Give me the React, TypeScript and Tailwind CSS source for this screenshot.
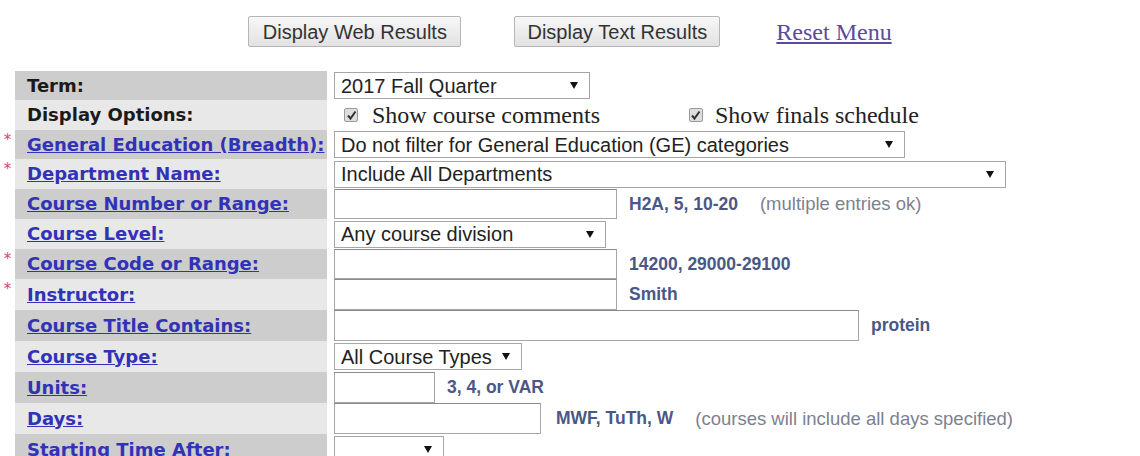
import React from "react";

type Row = {
  label: string;
  link: boolean;
  star?: boolean;
  h: string;
  dark: boolean;
  content: React.ReactNode;
};

const Arrow = () => (
  <svg width="10" height="9" viewBox="0 0 10 9" className="shrink-0">
    <polygon points="1,1 9,1 5,8" fill="#111" />
  </svg>
);

function Select({ text, w }: { text: string; w: string }) {
  return (
    <div
      className={`${w} h-[27px] bg-white border border-[#a6a6a6] flex items-center justify-between pl-[6px] pr-[10px] text-[20px] leading-none text-[#222] font-['Liberation_Sans',Arial,sans-serif]`}
    >
      <span className="whitespace-nowrap">{text}</span>
      <Arrow />
    </div>
  );
}

function Input({ w }: { w: string }) {
  return <div className={`${w} h-full bg-white border border-[#a6a6a6] border-t-[#8a8a8a]`} />;
}

function Hint({ text, cls }: { text: string; cls?: string }) {
  return (
    <span
      className={`whitespace-nowrap font-bold text-[17.5px] text-[#4a5787] font-['Liberation_Sans',Arial,sans-serif] ${cls ?? ""}`}
    >
      {text}
    </span>
  );
}

function Note({ text, cls }: { text: string; cls?: string }) {
  return (
    <span
      className={`whitespace-nowrap text-[18.5px] text-[#7c8190] font-['Liberation_Sans',Arial,sans-serif] ${cls ?? ""}`}
    >
      {text}
    </span>
  );
}

function Check() {
  return (
    <div className="w-[14px] h-[14px] border border-[#9a9a9a] bg-[#dedede] flex items-center justify-center rounded-[2px]">
      <svg width="11" height="11" viewBox="0 0 11 11">
        <path d="M2 5.5 L4.5 8.5 L9.5 1.5" stroke="#333" strokeWidth="2" fill="none" />
      </svg>
    </div>
  );
}

export default function App() {
  const rows: Row[] = [
    {
      label: "Term:",
      link: false,
      h: "h-[29px]",
      dark: true,
      content: <Select text="2017 Fall Quarter" w="w-[256px]" />,
    },
    {
      label: "Display Options:",
      link: false,
      h: "h-[30px]",
      dark: false,
      content: (
        <div className="flex items-center h-full font-['Liberation_Serif','Times_New_Roman',serif] text-[24px] leading-none text-[#222]">
          <div className="ml-[10px]">
            <Check />
          </div>
          <span className="ml-[14px] whitespace-nowrap">Show course comments</span>
          <div className="ml-[89px]">
            <Check />
          </div>
          <span className="ml-[12px] whitespace-nowrap">Show finals schedule</span>
        </div>
      ),
    },
    {
      label: "General Education (Breadth):",
      link: true,
      star: true,
      h: "h-[29px]",
      dark: true,
      content: <Select text="Do not filter for General Education (GE) categories" w="w-[571px]" />,
    },
    {
      label: "Department Name:",
      link: true,
      star: true,
      h: "h-[30px]",
      dark: false,
      content: <Select text="Include All Departments" w="w-[672px]" />,
    },
    {
      label: "Course Number or Range:",
      link: true,
      h: "h-[30px]",
      dark: true,
      content: (
        <div className="flex items-center h-full">
          <Input w="w-[283px]" />
          <Hint text="H2A, 5, 10-20" cls="ml-[12px]" />
          <Note text="(multiple entries ok)" cls="ml-[22px]" />
        </div>
      ),
    },
    {
      label: "Course Level:",
      link: true,
      h: "h-[30px]",
      dark: false,
      content: <Select text="Any course division" w="w-[272px]" />,
    },
    {
      label: "Course Code or Range:",
      link: true,
      star: true,
      h: "h-[30px]",
      dark: true,
      content: (
        <div className="flex items-center h-full">
          <Input w="w-[283px]" />
          <Hint text="14200, 29000-29100" cls="ml-[12px]" />
        </div>
      ),
    },
    {
      label: "Instructor:",
      link: true,
      star: true,
      h: "h-[31px]",
      dark: false,
      content: (
        <div className="flex items-center h-full">
          <Input w="w-[283px]" />
          <Hint text="Smith" cls="ml-[12px]" />
        </div>
      ),
    },
    {
      label: "Course Title Contains:",
      link: true,
      h: "h-[31px]",
      dark: true,
      content: (
        <div className="flex items-center h-full">
          <Input w="w-[525px]" />
          <Hint text="protein" cls="ml-[12px]" />
        </div>
      ),
    },
    {
      label: "Course Type:",
      link: true,
      h: "h-[31px]",
      dark: false,
      content: <Select text="All Course Types" w="w-[188px]" />,
    },
    {
      label: "Units:",
      link: true,
      h: "h-[31px]",
      dark: true,
      content: (
        <div className="flex items-center h-full">
          <Input w="w-[101px]" />
          <Hint text="3, 4, or VAR" cls="ml-[12px]" />
        </div>
      ),
    },
    {
      label: "Days:",
      link: true,
      h: "h-[31px]",
      dark: false,
      content: (
        <div className="flex items-center h-full">
          <Input w="w-[207px]" />
          <Hint text="MWF, TuTh, W" cls="ml-[15px]" />
          <Note text="(courses will include all days specified)" cls="ml-[22px]" />
        </div>
      ),
    },
    {
      label: "Starting Time After:",
      link: true,
      h: "h-[31px]",
      dark: true,
      content: <Select text="" w="w-[110px]" />,
    },
  ];

  return (
    <div className="w-[1140px] h-[456px] overflow-hidden bg-white">
      <div className="mt-[16px] h-[31px] flex justify-center items-center gap-[53px]">
        <button className="w-[213px] h-[31px] border border-[#b5b5b5] bg-gradient-to-b from-[#f7f7f7] to-[#e2e2e2] rounded-[2px] text-[20px] leading-none text-[#333] font-['Liberation_Sans',Arial,sans-serif]">
          Display Web Results
        </button>
        <button className="w-[206px] h-[31px] border border-[#b5b5b5] bg-gradient-to-b from-[#f7f7f7] to-[#e2e2e2] rounded-[2px] text-[20px] leading-none text-[#333] font-['Liberation_Sans',Arial,sans-serif]">
          Display Text Results
        </button>
        <a className="ml-[3px] text-[24px] leading-none text-[#5b4b9e] underline font-['Liberation_Serif','Times_New_Roman',serif]">
          Reset Menu
        </a>
      </div>

      <div className="mt-[24px] flex flex-col">
        {rows.map((r, i) => (
          <div key={i} className={`flex ${r.h}`}>
            <div className="w-[15px] shrink-0 flex justify-center pt-[3px]">
              {r.star && (
                <span className="text-[15px] leading-none text-[#d9456a] font-['DejaVu_Sans',sans-serif]">*</span>
              )}
            </div>
            <div
              className={`w-[312px] shrink-0 flex items-center pl-[12px] ${r.dark ? "bg-[#cdcdcd]" : "bg-[#e8e8e8]"}`}
            >
              <span
                className={`whitespace-nowrap font-bold text-[18px] leading-none font-['DejaVu_Sans',Verdana,sans-serif] ${
                  r.link ? "text-[#3232b8] underline" : "text-[#1a1a1a]"
                }`}
              >
                {r.label}
              </span>
            </div>
            <div className="ml-[6px] pl-[1px] flex items-center">{r.content}</div>
          </div>
        ))}
      </div>
    </div>
  );
}
